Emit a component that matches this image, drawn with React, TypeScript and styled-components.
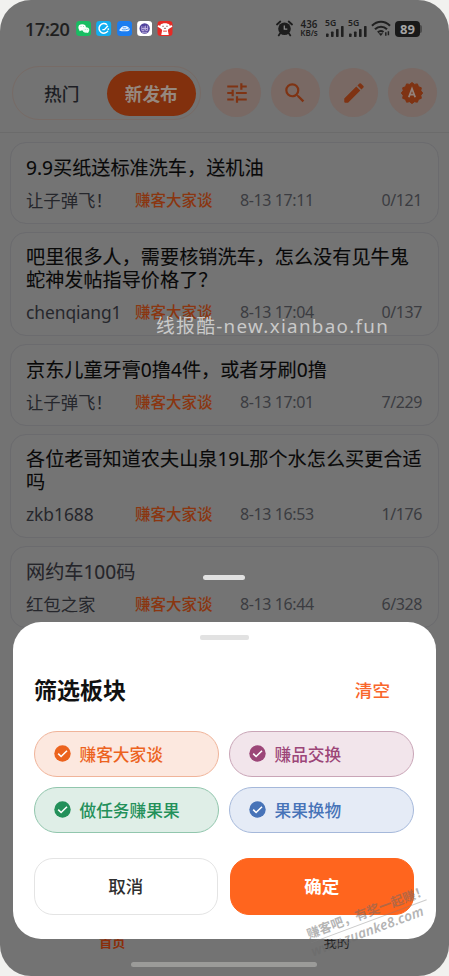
import React from 'react';
import styled, { createGlobalStyle } from 'styled-components';

const Global = createGlobalStyle`
  * { box-sizing: border-box; }
  body {
    margin: 0;
    background: #f1f1ef;
    font-family: "Noto Sans", "Noto Sans CJK SC", sans-serif;
  }
  button { font-family: inherit; padding: 0; margin: 0; }
`;

const Phone = styled.main`
  position: relative;
  width: 449px;
  height: 976px;
  border-radius: 31px;
  overflow: hidden;
  background: #737373;
  display: flex;
  flex-direction: column;
`;

const StatusBar = styled.div`
  height: 57px;
  padding: 0 27px 0 25px;
  display: flex;
  align-items: center;
  flex: none;
  color: #1e1e1e;
`;

const Clock = styled.span`
  width: 51px;
  font-size: 18px;
  line-height: 24px;
  font-weight: 500;
  -webkit-text-stroke: 0.2px;
  letter-spacing: -0.35px;
  white-space: nowrap;
`;

const AppIcons = styled.div`
  display: flex;
  gap: 5px;
  svg { display: block; }
`;

const StatusRight = styled.div`
  margin-left: auto;
  display: flex;
  align-items: center;
`;

const Speed = styled.div`
  margin: 0 6px 0 6px;
  width: 20px;
  text-align: center;
  font-size: 9.8px;
  line-height: 9px;
  font-weight: 600;
  white-space: nowrap;
  display: flex;
  flex-direction: column;
  align-items: center;
`;

const SmallUnit = styled.span`
  font-size: 8px;
  line-height: 8px;
`;

const Signal = styled.div`
  width: 19px;
  margin-right: 4px;
  height: 17px;
  display: flex;
  flex-direction: column;
  font-size: 8.6px;
  font-weight: 600;
  line-height: 7px;
  svg { display: block; margin-top: -2px; margin-left: 1px; }
`;

const Battery = styled.div`
  display: flex;
  align-items: center;
  margin-left: 4px;
`;

const BatteryBody = styled.div`
  width: 25px;
  height: 16px;
  border-radius: 4px;
  background: #191919;
  color: #a5a5a5;
  font-size: 13px;
  font-weight: 700;
  line-height: 16px;
  text-align: center;
`;

const BatteryCap = styled.div`
  width: 2px;
  height: 8px;
  border-radius: 0 3px 3px 0;
  background: #4c4c4c;
`;

const Header = styled.header`
  flex: none;
  height: 76px;
  padding: 9px 13px 0 12px;
  border-bottom: 1px solid #6b6b6b;
  display: flex;
  align-items: flex-start;
`;

const Tabs = styled.div`
  width: 189px;
  height: 54px;
  border: 1px solid #776b66;
  border-radius: 27px;
  padding: 4px;
  display: flex;
`;

const Tab = styled.button<{ $active?: boolean }>`
  width: 90px;
  height: 45px;
  border: 0;
  border-radius: 22.5px;
  padding-bottom: 2px;
  background: ${p => (p.$active ? '#82300d' : 'transparent')};
  color: ${p => (p.$active ? '#96887f' : '#1d1e24')};
  font-size: 17.7px;
  font-weight: ${p => (p.$active ? 700 : 500)};
`;

const Tools = styled.div`
  display: flex;
  gap: 9.5px;
  margin: 2px 0 0 11px;
`;

const Tool = styled.button`
  width: 49px;
  height: 49px;
  border: 0;
  border-radius: 50%;
  background: #796964;
  color: #7f3313;
  display: flex;
  align-items: center;
  justify-content: center;
`;

const List = styled.section`
  padding: 9px 10px 0;
  display: flex;
  flex-direction: column;
  gap: 8px;
`;

const Card = styled.article`
  border: 1px solid #6b6b6e;
  border-radius: 16px;
  background: #747474;
  padding: 13.5px 0 11px 15px;
`;

const CardTitle = styled.h2<{ $read?: boolean }>`
  margin: 0;
  color: ${p => (p.$read ? '#25252a' : '#090909')};
  font-size: 19.15px;
  line-height: 23px;
  font-weight: 400;
  -webkit-text-stroke: 0.1px;
  white-space: pre;
`;

const Meta = styled.div`
  margin-top: 8px;
  padding-right: 16px;
  height: 24px;
  line-height: 24px;
  display: grid;
  grid-template-columns: 109px 105px 1fr auto;
  white-space: nowrap;
`;

const Author = styled.span`
  font-size: 17.4px;
  letter-spacing: -0.05px;
  color: #26272c;
`;

const Topic = styled.span`
  font-size: 15.5px;
  font-weight: 500;
  color: #8a3610;
`;

const Stat = styled.span`
  font-size: 16px;
  letter-spacing: -0.4px;
  color: #3b3c41;
`;

const PeekHandle = styled.div`
  position: absolute;
  left: 203px;
  top: 575px;
  width: 42px;
  height: 5px;
  border-radius: 3px;
  background: #e1e1e1;
`;

const BottomNav = styled.nav`
  position: absolute;
  left: 0;
  right: 0;
  bottom: 24px;
  display: grid;
  grid-template-columns: 1fr 1fr;
  text-align: center;
  font-size: 13px;
  line-height: 20px;
`;

const NavItem = styled.span<{ $active?: boolean }>`
  color: ${p => (p.$active ? '#8a2e0a' : '#222')};
  font-weight: ${p => (p.$active ? 700 : 400)};
`;

const HomeBar = styled.div`
  position: absolute;
  left: 131px;
  top: 962px;
  width: 186px;
  height: 5px;
  border-radius: 3px;
  background: #9b9b99;
`;

const Sheet = styled.section`
  position: absolute;
  left: 12.5px;
  top: 622px;
  width: 423px;
  height: 317px;
  border-radius: 28px;
  background: #fff;
  padding: 13px 21.5px 0;
`;

const SheetHandle = styled.div`
  width: 49px;
  height: 5px;
  margin: 0 auto;
  border-radius: 2px;
  background: #e2e2e2;
`;

const SheetHead = styled.div`
  height: 40px;
  margin-top: 30px;
  padding-right: 24px;
  display: flex;
  align-items: center;
  justify-content: space-between;
`;

const SheetTitle = styled.h1`
  margin: 0;
  font-size: 23px;
  font-weight: 700;
  line-height: 34px;
  color: #111;
`;

const Clear = styled.button`
  border: 0;
  background: none;
  padding-bottom: 2px;
  color: #f9662b;
  font-size: 17.6px;
  font-weight: 500;
`;

const Chips = styled.div`
  margin-top: 21px;
  display: grid;
  grid-template-columns: 185px 185px;
  column-gap: 10px;
  row-gap: 10px;
`;

const Chip = styled.button<{ $ink: string; $fill: string; $line: string }>`
  height: 46px;
  border: 1.3px solid ${p => p.$line};
  border-radius: 23px;
  background: ${p => p.$fill};
  color: ${p => p.$ink};
  padding: 0 0 1px 18.5px;
  display: flex;
  align-items: center;
  gap: 9px;
  font-size: 16.7px;
  font-weight: 500;
  svg { display: block; }
`;

const Actions = styled.div`
  margin-top: 25px;
  display: grid;
  grid-template-columns: 183.5px 183.5px;
  column-gap: 12.5px;
`;

const Action = styled.button<{ $primary?: boolean }>`
  height: 57px;
  border-radius: 19px;
  border: 1.3px solid ${p => (p.$primary ? '#ff651e' : '#e4e4e4')};
  background: ${p => (p.$primary ? '#ff651e' : '#fff')};
  color: ${p => (p.$primary ? '#fff' : '#303030')};
  padding-bottom: 2px;
  font-size: 17.5px;
  font-weight: ${p => (p.$primary ? 700 : 500)};
`;

const SiteMark = styled.div`
  position: absolute;
  left: 156px;
  top: 313px;
  color: #c9c9c9;
  font-size: 18.8px;
  line-height: 26px;
  letter-spacing: 1.3px;
  white-space: nowrap;
`;

const CornerMark = styled.div`
  position: absolute;
  left: 306px;
  top: 903px;
  width: 124px;
  transform: rotate(-20.5deg);
  color: rgba(105, 105, 105, 0.5);
  font-weight: 700;
  white-space: nowrap;
`;

const MarkTop = styled.div`
  font-size: 12.8px;
  line-height: 18px;
  border-bottom: 1px solid rgba(125, 125, 125, 0.4);
`;

const MarkBottom = styled.div`
  margin-left: -2px;
  font-size: 13.7px;
  line-height: 15px;
  font-style: italic;
  font-weight: 600;
  letter-spacing: 0.1px;
`;

interface Post {
  title: string;
  author: string;
  date: string;
  count: string;
  read?: boolean;
}

const posts: Post[] = [
  { title: '9.9买纸送标准洗车，送机油', author: '让子弹飞！', date: '8-13 17:11', count: '0/121' },
  { title: '吧里很多人，需要核销洗车，怎么没有见牛鬼\n蛇神发帖指导价格了？', author: 'chenqiang1', date: '8-13 17:04', count: '0/137' },
  { title: '京东儿童牙膏0撸4件，或者牙刷0撸', author: '让子弹飞！', date: '8-13 17:01', count: '7/229' },
  { title: '各位老哥知道农夫山泉19L那个水怎么买更合适\n吗', author: 'zkb1688', date: '8-13 16:53', count: '1/176' },
  { title: '网约车100码', author: '红包之家', date: '8-13 16:44', count: '6/328', read: true },
];

const boards = [
  { name: '赚客大家谈', ink: '#ec631e', fill: '#fce8df', line: '#f0b49a' },
  { name: '赚品交换', ink: '#9c4678', fill: '#f2e5eb', line: '#c9a5b7' },
  { name: '做任务赚果果', ink: '#23905a', fill: '#dfeee7', line: '#91c6ad' },
  { name: '果果换物', ink: '#4773b8', fill: '#e5ebf6', line: '#a5b8da' },
];

const CheckIcon = () => (
  <svg width="17" height="17" viewBox="0 0 17 17">
    <circle cx="8.5" cy="8.5" r="8.2" fill="currentColor" />
    <path d="M4.2 8.7 7.1 11.5 13 5.7" fill="none" stroke="#fff" strokeWidth="1.6" />
  </svg>
);

const TuneIcon = () => (
  <svg width="26" height="26" viewBox="0 0 24 24" fill="currentColor">
    <path d="M3 17v2h6v-2H3zM3 5v2h10V5H3zm10 16v-2h8v-2h-8v-2h-2v6h2zM7 9v2H3v2h4v2h2V9H7zm14 4v-2H11v2h10zm-6-4h2V7h4V5h-4V3h-2v6z" />
  </svg>
);

const SearchIcon = () => (
  <svg width="26" height="26" viewBox="0 0 24 24" fill="currentColor">
    <path d="M15.5 14h-.79l-.28-.27A6.47 6.47 0 0 0 16 9.5 6.5 6.5 0 1 0 9.5 16c1.61 0 3.09-.59 4.23-1.57l.27.28v.79l5 4.99L20.49 19l-4.99-5zm-6 0a4.5 4.5 0 1 1 0-9 4.5 4.5 0 0 1 0 9z" />
  </svg>
);

const EditIcon = () => (
  <svg width="26" height="26" viewBox="0 0 24 24" fill="currentColor">
    <path d="M3 17.5V20a1 1 0 0 0 1 1h2.5L17.8 9.7l-3.7-3.8L3 17.1zM20.7 7a1 1 0 0 0 0-1.4l-2.3-2.3a1 1 0 0 0-1.4 0l-1.8 1.8 3.7 3.7z" />
  </svg>
);

const BadgeIcon = () => (
  <svg width="24" height="24" viewBox="0 0 24 24">
    <path
      d="M12 1.5 14.4 3.4 17.4 2.9 18.5 5.7 21.3 6.8 20.8 9.8 22.7 12 20.8 14.3 21.3 17.3 18.5 18.4 17.4 21.2 14.4 20.7 12 22.6 9.6 20.7 6.6 21.2 5.5 18.4 2.7 17.3 3.2 14.3 1.3 12 3.2 9.8 2.7 6.8 5.5 5.7 6.6 2.9 9.6 3.4Z"
      fill="currentColor" stroke="currentColor" strokeLinejoin="round"
    />
    <path d="M8.8 16.3 12 7.8l3.2 8.5M9.9 13.6h4.2" fill="none" stroke="#93827b" strokeWidth="1.8" />
  </svg>
);

const AlarmIcon = () => (
  <svg width="17" height="17" viewBox="0 0 17 17">
    <circle cx="8.5" cy="8.8" r="6.3" fill="#1d1d1d" />
    <path d="M1 4.5 4.3 1.5M16 4.5 12.7 1.5M4 13.5 2.7 15.4M13 13.5l1.3 1.9" stroke="#1d1d1d" strokeWidth="1.8" strokeLinecap="round" />
    <path d="M8.3 5.5V9.2h3" fill="none" stroke="#8a8a8a" strokeWidth="1.3" />
  </svg>
);

const BarsIcon = () => (
  <svg width="18" height="12" viewBox="0 0 18 12" fill="#202020">
    <rect x="0" y="8.5" width="2.6" height="3.5" rx=".7" />
    <rect x="5" y="6.5" width="2.6" height="5.5" rx=".7" />
    <rect x="10" y="4" width="2.6" height="8" rx=".7" />
    <rect x="15" y="1" width="2.6" height="11" rx=".7" />
  </svg>
);

const WifiIcon = () => (
  <svg width="20" height="17" viewBox="0 0 20 17" fill="none" stroke="#202020" strokeWidth="2.1">
    <path d="M1 5.8C6.2.4 13.8.4 19 5.8M4 9.3c3.5-3.5 8.5-3.5 12 0M6.8 12.4c1.8-1.6 4-1.7 5.7-.4" />
    <path d="M7.5 13.2h4.6L9.8 16z" fill="#202020" stroke="none" />
    <path d="M14.8 12.2v3.6M17.4 11.2v4" strokeWidth="1.5" />
  </svg>
);

const StatusApps = () => (
  <AppIcons>
    <svg width="15.3" height="15" viewBox="0 0 16 16">
      <rect width="16" height="16" rx="3.5" fill="#18bd62" />
      <ellipse cx="6.4" cy="6.8" rx="4" ry="3.4" fill="#fff" />
      <ellipse cx="10.5" cy="9.5" rx="3.5" ry="2.9" fill="#edfff4" />
      <path d="m3.8 9-.5 2 2-1zM11 12l2 .8-.3-1.8z" fill="#fff" />
      <circle cx="5.2" cy="6" r=".5" fill="#18bd62" /><circle cx="7.8" cy="6" r=".5" fill="#18bd62" />
      <circle cx="9.6" cy="9" r=".4" fill="#18bd62" /><circle cx="11.8" cy="9" r=".4" fill="#18bd62" />
    </svg>
    <svg width="15.3" height="15" viewBox="0 0 16 16">
      <rect width="16" height="16" rx="3.5" fill="#12aef0" />
      <path d="M11.6 4.1A5.1 5.1 0 1 0 12.6 10.4" fill="none" stroke="#fff" strokeWidth="1.6" />
      <path d="M6.6 9.2h2.2L12.6 5" fill="none" stroke="#fff" strokeWidth="1.5" />
      <circle cx="13" cy="8.6" r="1" fill="#fff" />
    </svg>
    <svg width="15.3" height="15" viewBox="0 0 16 16">
      <rect width="16" height="16" rx="3.5" fill="#1b7df0" />
      <path d="M2 9.8C3.2 9 3.8 5.3 8.2 5.2c3.2 0 4.4 1.6 5.3 3.2-.3 2.1-2.4 2.7-4.9 2.6-2.4 0-4.7 0-6.6-1.2z" fill="#eef7ff" />
      <path d="M5 9.2c3 .7 5.2 0 7.7-1M6 7.2h3.7" fill="none" stroke="#1b7df0" strokeWidth=".8" />
    </svg>
    <svg width="15.3" height="15" viewBox="0 0 16 16">
      <rect width="16" height="16" rx="3.5" fill="#fff" />
      <circle cx="8" cy="8" r="5.5" fill="#51439c" />
      <path d="M5 5.5v4.8h2.4V5.5M9 5v5h2.2V5M5 8h6.2M5 12h6" fill="none" stroke="#cbbde6" strokeWidth=".9" />
    </svg>
    <svg width="16" height="15" viewBox="0 0 16 16">
      <rect width="16" height="16" rx="3.5" fill="#e62b25" />
      <path d="M3.2 4C5 1.8 11 1.8 12.8 4l.6 3-2.4 2.6 1 5.4H4l1-5.4L2.5 7z" fill="#fff" />
      <path d="M.6 5.2 4 7M15.4 5.2 12 7" stroke="#fff" strokeWidth="2.2" />
      <path d="M5.1 5.6h1.6M9.3 5.6h1.6M6.9 7.8h2.2" stroke="#6c302b" strokeWidth=".8" />
      <path d="M6 10.8h4" stroke="#e62b25" strokeWidth="1" />
    </svg>
  </AppIcons>
);

const SignalStack = () => (
  <Signal><span>5G</span><BarsIcon /></Signal>
);

export default function App() {
  return (
    <>
      <Global />
      <Phone>
        <StatusBar>
          <Clock>17:20</Clock>
          <StatusApps />
          <StatusRight>
            <AlarmIcon />
            <Speed><span>436</span><SmallUnit>KB/s</SmallUnit></Speed>
            <SignalStack />
            <SignalStack />
            <WifiIcon />
            <Battery><BatteryBody>89</BatteryBody><BatteryCap /></Battery>
          </StatusRight>
        </StatusBar>
        <Header>
          <Tabs>
            <Tab>热门</Tab>
            <Tab $active>新发布</Tab>
          </Tabs>
          <Tools>
            <Tool aria-label="筛选"><TuneIcon /></Tool>
            <Tool aria-label="搜索"><SearchIcon /></Tool>
            <Tool aria-label="发帖"><EditIcon /></Tool>
            <Tool aria-label="主题"><BadgeIcon /></Tool>
          </Tools>
        </Header>
        <List>
          {posts.map(post => (
            <Card key={post.title}>
              <CardTitle $read={post.read}>{post.title}</CardTitle>
              <Meta>
                <Author>{post.author}</Author>
                <Topic>赚客大家谈</Topic>
                <Stat>{post.date}</Stat>
                <Stat>{post.count}</Stat>
              </Meta>
            </Card>
          ))}
        </List>
        <SiteMark>线报酷-new.xianbao.fun</SiteMark>
        <PeekHandle />
        <BottomNav>
          <NavItem $active>首页</NavItem>
          <NavItem>我的</NavItem>
        </BottomNav>
        <HomeBar />
        <Sheet>
          <SheetHandle />
          <SheetHead>
            <SheetTitle>筛选板块</SheetTitle>
            <Clear>清空</Clear>
          </SheetHead>
          <Chips>
            {boards.map(b => (
              <Chip key={b.name} $ink={b.ink} $fill={b.fill} $line={b.line}>
                <CheckIcon />
                <span>{b.name}</span>
              </Chip>
            ))}
          </Chips>
          <Actions>
            <Action>取消</Action>
            <Action $primary>确定</Action>
          </Actions>
        </Sheet>
        <CornerMark>
          <MarkTop>赚客吧，有奖一起赚！</MarkTop>
          <MarkBottom>www.zuanke8.com</MarkBottom>
        </CornerMark>
      </Phone>
    </>
  );
}
